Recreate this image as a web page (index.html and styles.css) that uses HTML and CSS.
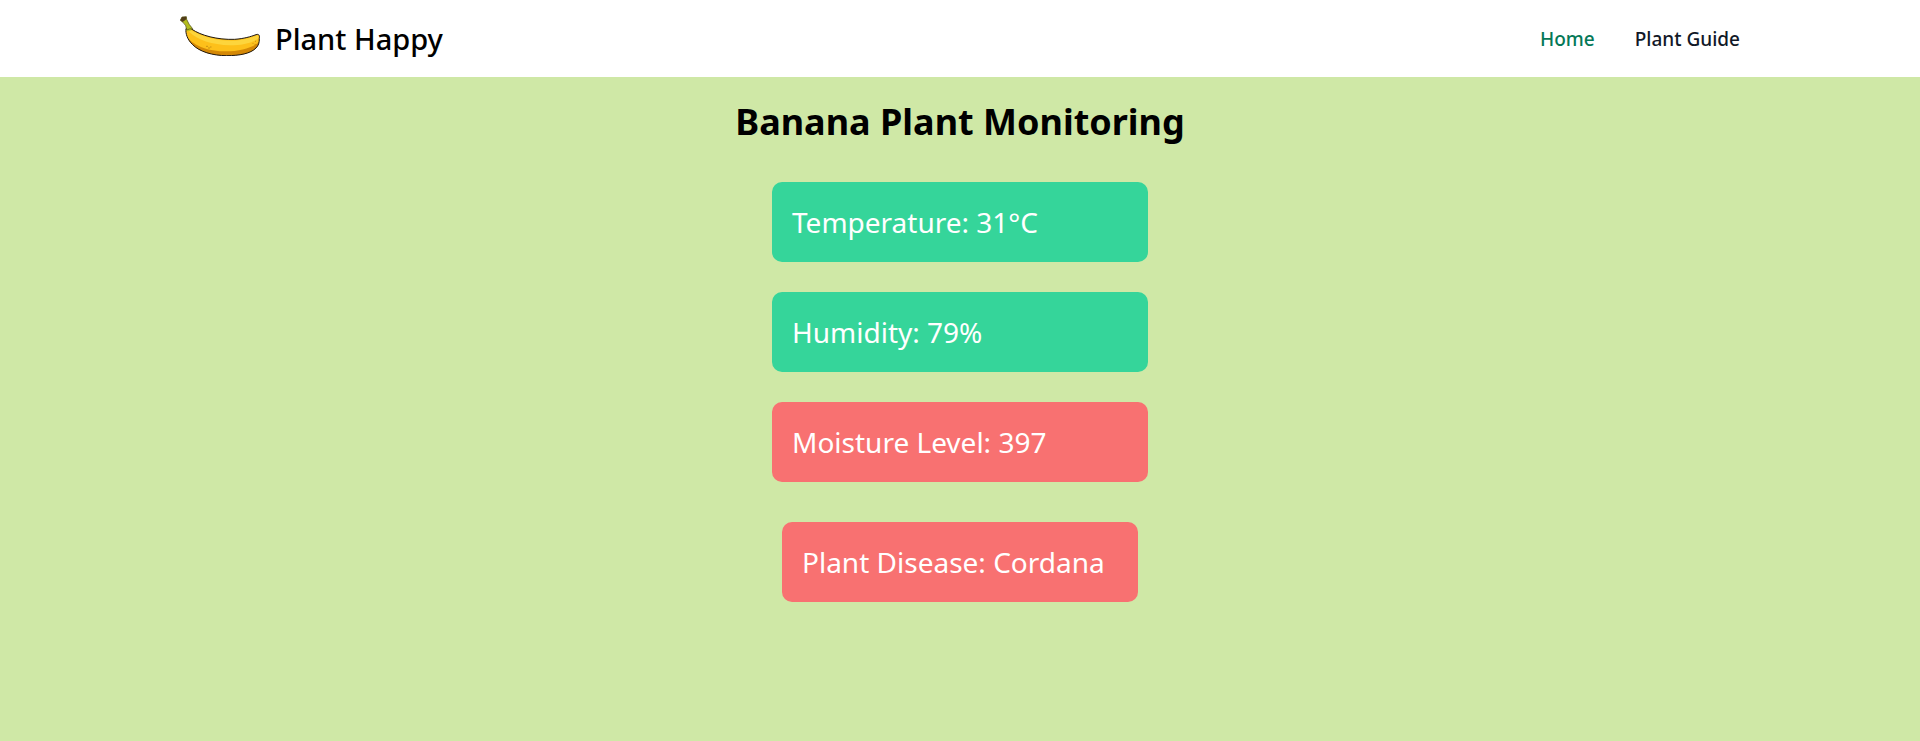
FILE: index.html
```html
<!DOCTYPE html>
<html lang="en">
<head>
<meta charset="utf-8">
<title>Plant Happy</title>
<link rel="stylesheet" href="styles.css">
</head>
<body>
<header class="navbar">
  <div class="navbar-inner">
    <a class="brand" href="#">
      <svg class="brand-logo" viewBox="30 36 240 120" aria-hidden="true">
        <defs>
          <clipPath id="fruit"><path d="M48 74C54 68 60 71 66 76C92 94 142 108 194 106C222 104 242 98 258 92C266 89 270 94 268 103C268 116 266 124 258 132C242 149 208 155 170 155C128 155 88 143 68 122C52 107 46 88 48 74Z"/></clipPath>
        </defs>
        <g clip-path="url(#fruit)">
          <path d="M40 60H280V160H40Z" fill="#fdc01a"/>
          <path d="M58 74C86 96 140 112 194 110C222 108 246 100 264 94L264 104C244 118 214 124 180 124C126 122 82 108 58 84Z" fill="#fdd53c"/>
          <path d="M44 84C54 116 100 140 160 142C210 143 246 132 270 112V160H40Z" fill="#d48806"/>
          <path d="M46 66L70 74Q62 82 50 82Z" fill="#c5c417"/>
        </g>
        <path d="M48 74C54 68 60 71 66 76C92 94 142 108 194 106C222 104 242 98 258 92C266 89 270 94 268 103C268 116 266 124 258 132C242 149 208 155 170 155C128 155 88 143 68 122C52 107 46 88 48 74Z" fill="none" stroke="#1c1510" stroke-width="3"/>
        <path d="M31 49L36 39L49 38L50 46Q56 62 68 74Q58 74 50 78Q50 64 38 54Z" fill="#b3bd1c" stroke="#4a4718" stroke-width="2"/>
        <path d="M31 49L36 39L49 38L49 46L38 54Z" fill="#513d18"/>
        <path d="M109 127h4M115 132h4M121 129h3M248 118h2M255 112h2M254 121h2" stroke="#8a5a0d" stroke-width="2"/>
      </svg>
      <span class="brand-name">Plant Happy</span>
    </a>
    <nav class="nav-links">
      <a class="nav-link active" href="#">Home</a>
      <a class="nav-link" href="#">Plant Guide</a>
    </nav>
  </div>
</header>
<main class="dashboard">
  <h1 class="title">Banana Plant Monitoring</h1>
  <section class="readings">
    <p class="card good">Temperature: 31°C</p>
    <p class="card good">Humidity: 79%</p>
    <p class="card alert">Moisture Level: 397</p>
    <p class="card alert disease">Plant Disease: Cordana</p>
  </section>
</main>
</body>
</html>
```
FILE: styles.css
```css
* { box-sizing: border-box; margin: 0; }
body {
  display: flex;
  flex-direction: column;
  min-height: 100vh;
  background: #cfe8a6;
  color: #000;
  font-family: "Segoe UI", "Noto Sans", "Open Sans", sans-serif;
}
.navbar { background: #fff; }
.navbar-inner {
  display: flex;
  align-items: center;
  justify-content: space-between;
  max-width: 1600px;
  margin: 0 auto;
  padding: 16px 20px;
}
.brand, .nav-link { color: inherit; text-decoration: none; }
.brand { display: flex; align-items: flex-start; gap: 15px; }
.brand-logo { width: 80px; height: 40px; }
.brand-name { font-size: 29px; font-weight: 500; line-height: 45px; }
.nav-links { display: flex; gap: 40px; }
.nav-link { color: #111827; font-size: 19px; font-weight: 500; line-height: 30px; }
.nav-link.active { color: #047857; }
.dashboard { padding: 20px; }
.title { font-size: 36px; font-weight: 700; line-height: 50px; text-align: center; }
.readings {
  display: flex;
  flex-direction: column;
  gap: 30px;
  width: 376px;
  margin: 35px auto 0;
}
.card {
  padding: 20px;
  border-radius: 10px;
  color: #fff;
  font-size: 28px;
  line-height: 40px;
  white-space: nowrap;
}
.good { background: #35d59a; }
.alert { background: #f87171; }
.disease { margin: 10px; }
```
